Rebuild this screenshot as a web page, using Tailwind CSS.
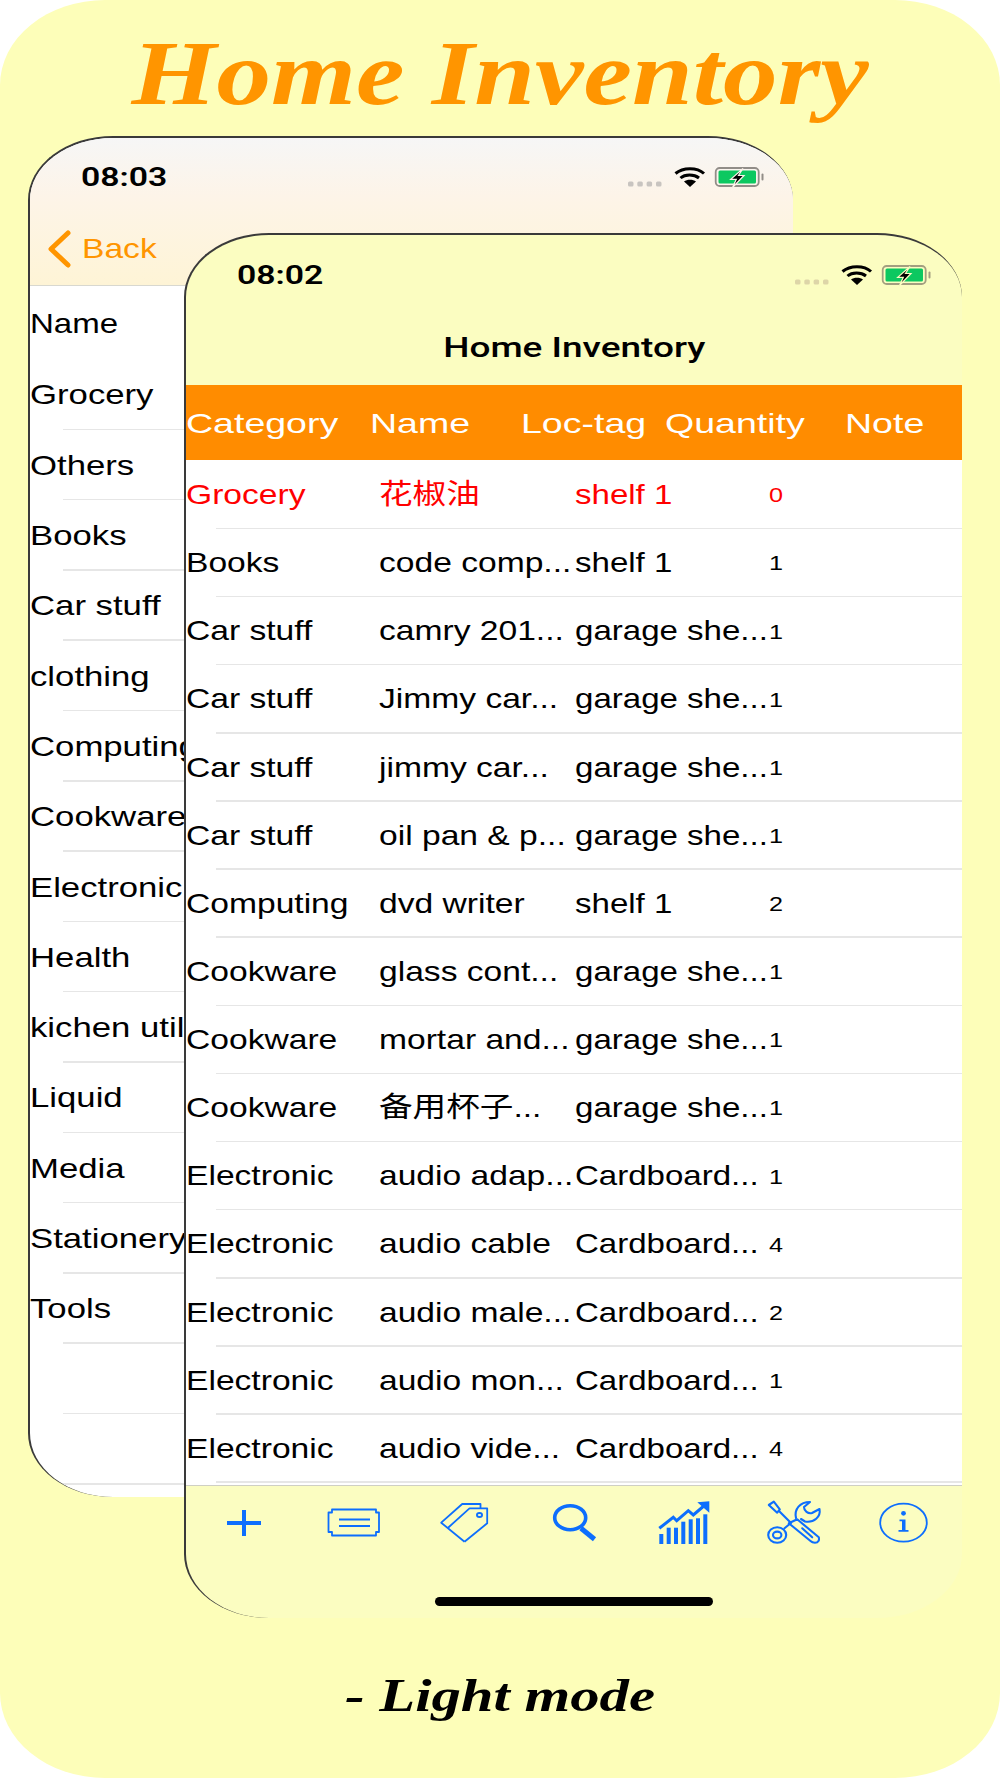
<!doctype html>
<html>
<head>
<meta charset="utf-8">
<script src="https://cdn.jsdelivr.net/npm/@tailwindcss/browser@4"></script>
</head>
<body class="bg-white">
<div class="relative w-[1000px] h-[1778px] overflow-hidden bg-[#fdfeb9] rounded-[105px/85px] font-['Liberation_Sans','Noto_Sans_CJK_SC',sans-serif] text-black">

  <div class="flex justify-center pt-[24px] h-[137px]">
    <h1 class="font-['Liberation_Serif',serif] font-bold italic text-[91px] leading-[100px] text-[#ff9500] scale-x-[1.2] whitespace-nowrap">Home Inventory</h1>
  </div>

  <!-- back window -->
  <section class="absolute left-[28px] top-[136px] w-[765px] h-[1361px] rounded-[85px/64px] overflow-hidden border-l-2 border-t-2 border-[#3a3a3a] bg-white">
    <div class="h-[147.5px] border-b-[1.5px] border-[#d8d8d0] bg-gradient-to-b from-[#f6f6f6] via-[#fdf4e8] via-40% to-[#fef4d6]">
      <div class="flex justify-between items-start pt-[25px] pl-[51px] pr-[27px] h-[84px]">
        <div class="font-['Roboto'] font-semibold text-[25px] leading-[30px] origin-left scale-x-[1.35] whitespace-nowrap">08:03</div>
        <svg class="mt-[2px]" width="140" height="24" viewBox="0 0 140 24">
          <g fill="#c8c4c0"><rect x="2" y="16.5" width="5.5" height="5" rx="1.5"/><rect x="11.3" y="16.5" width="5.5" height="5" rx="1.5"/><rect x="20.6" y="16.5" width="5.5" height="5" rx="1.5"/><rect x="30" y="16.5" width="5.5" height="5" rx="1.5"/></g>
          <g fill="none" stroke="#000" stroke-width="3"><path d="M49.5 8.5C57 2 71 2 78 8.500"/><path d="M54.500 13C59 9 68 9 73 13"/></g>
          <path d="M58 16.500C61 14.300 67 14.300 70 16.500L64 22Z" fill="#000"/>
          <rect x="89.700" y="3" width="43" height="18" rx="4" fill="none" stroke="#918d88" stroke-width="1.800"/>
          <rect x="92.500" y="5.500" width="37.500" height="13" rx="1.500" fill="#0cc860"/>
          <rect x="135.500" y="8.500" width="2" height="7" rx="1" fill="#918d88"/>
          <polygon points="117,3.500 104.700,14.300 110.300,14.300 106.500,22.500 118,10.500 112.500,10.500" fill="#000" stroke="#fdf3ea" stroke-width="1.200"/>
        </svg>
      </div>
      <div class="flex items-center pl-[16px] h-[54px]">
        <svg width="26" height="38" viewBox="0 0 26 38" fill="none"><path d="M22 3L5 19L22 35" stroke="#ff9500" stroke-width="5" stroke-linecap="round" stroke-linejoin="round"/></svg>
        <span class="ml-[10px] text-[28px] text-[#ff9500] origin-left scale-x-[1.2]">Back</span>
      </div>
    </div>
    <div class="mt-[4px] text-[28px] *:flex *:items-center *:h-[70.3px] *:relative *:pt-[1px]">
      <div><span class="-mt-[3px] origin-left scale-x-[1.18] whitespace-nowrap">Name</span></div>
      <div class="after:absolute after:left-[33px] after:right-0 after:bottom-0 after:h-[1.5px] after:bg-[#e6e6e6]"><span class="origin-left scale-x-[1.24] whitespace-nowrap">Grocery</span></div>
      <div class="after:absolute after:left-[33px] after:right-0 after:bottom-0 after:h-[1.5px] after:bg-[#e6e6e6]"><span class="origin-left scale-x-[1.24] whitespace-nowrap">Others</span></div>
      <div class="after:absolute after:left-[33px] after:right-0 after:bottom-0 after:h-[1.5px] after:bg-[#e6e6e6]"><span class="origin-left scale-x-[1.24] whitespace-nowrap">Books</span></div>
      <div class="after:absolute after:left-[33px] after:right-0 after:bottom-0 after:h-[1.5px] after:bg-[#e6e6e6]"><span class="origin-left scale-x-[1.24] whitespace-nowrap">Car stuff</span></div>
      <div class="after:absolute after:left-[33px] after:right-0 after:bottom-0 after:h-[1.5px] after:bg-[#e6e6e6]"><span class="origin-left scale-x-[1.24] whitespace-nowrap">clothing</span></div>
      <div class="after:absolute after:left-[33px] after:right-0 after:bottom-0 after:h-[1.5px] after:bg-[#e6e6e6]"><span class="origin-left scale-x-[1.24] whitespace-nowrap">Computing</span></div>
      <div class="after:absolute after:left-[33px] after:right-0 after:bottom-0 after:h-[1.5px] after:bg-[#e6e6e6]"><span class="origin-left scale-x-[1.24] whitespace-nowrap">Cookware</span></div>
      <div class="after:absolute after:left-[33px] after:right-0 after:bottom-0 after:h-[1.5px] after:bg-[#e6e6e6]"><span class="origin-left scale-x-[1.24] whitespace-nowrap">Electronic</span></div>
      <div class="after:absolute after:left-[33px] after:right-0 after:bottom-0 after:h-[1.5px] after:bg-[#e6e6e6]"><span class="origin-left scale-x-[1.24] whitespace-nowrap">Health</span></div>
      <div class="after:absolute after:left-[33px] after:right-0 after:bottom-0 after:h-[1.5px] after:bg-[#e6e6e6]"><span class="origin-left scale-x-[1.24] whitespace-nowrap">kichen utils</span></div>
      <div class="after:absolute after:left-[33px] after:right-0 after:bottom-0 after:h-[1.5px] after:bg-[#e6e6e6]"><span class="origin-left scale-x-[1.24] whitespace-nowrap">Liquid</span></div>
      <div class="after:absolute after:left-[33px] after:right-0 after:bottom-0 after:h-[1.5px] after:bg-[#e6e6e6]"><span class="origin-left scale-x-[1.24] whitespace-nowrap">Media</span></div>
      <div class="after:absolute after:left-[33px] after:right-0 after:bottom-0 after:h-[1.5px] after:bg-[#e6e6e6]"><span class="origin-left scale-x-[1.24] whitespace-nowrap">Stationery</span></div>
      <div class="after:absolute after:left-[33px] after:right-0 after:bottom-0 after:h-[1.5px] after:bg-[#e6e6e6]"><span class="origin-left scale-x-[1.24] whitespace-nowrap">Tools</span></div>
      <div class="after:absolute after:left-[33px] after:right-0 after:bottom-0 after:h-[1.5px] after:bg-[#e6e6e6]"></div>
      <div class="after:absolute after:left-[33px] after:right-0 after:bottom-0 after:h-[1.5px] after:bg-[#e6e6e6]"></div>
    </div>
  </section>

  <!-- front window -->
  <section class="absolute left-[184px] top-[233px] w-[778px] h-[1385px] rounded-[85px/64px] overflow-hidden border-l-2 border-t-2 border-[#3a3a3a] bg-[#fbfdc1] flex flex-col">
    <div class="h-[150px] shrink-0">
      <div class="flex justify-between items-start pt-[26px] pl-[51px] pr-[29px] h-[95px]">
        <div class="font-['Roboto'] font-semibold text-[25px] leading-[30px] origin-left scale-x-[1.35] whitespace-nowrap">08:02</div>
        <svg class="mt-[2px]" width="140" height="24" viewBox="0 0 140 24">
          <g fill="#ddd5a8"><rect x="2" y="16.5" width="5.5" height="5" rx="1.5"/><rect x="11.3" y="16.5" width="5.5" height="5" rx="1.5"/><rect x="20.6" y="16.5" width="5.5" height="5" rx="1.5"/><rect x="30" y="16.5" width="5.5" height="5" rx="1.5"/></g>
          <g fill="none" stroke="#000" stroke-width="3"><path d="M49.5 8.5C57 2 71 2 78 8.500"/><path d="M54.500 13C59 9 68 9 73 13"/></g>
          <path d="M58 16.500C61 14.300 67 14.300 70 16.500L64 22Z" fill="#000"/>
          <rect x="89.700" y="3" width="43" height="18" rx="4" fill="none" stroke="#a39f80" stroke-width="1.800"/>
          <rect x="92.500" y="5.500" width="37.500" height="13" rx="1.500" fill="#0cc860"/>
          <rect x="135.500" y="8.500" width="2" height="7" rx="1" fill="#a39f80"/>
          <polygon points="117,3.500 104.700,14.300 110.300,14.300 106.500,22.500 118,10.500 112.500,10.500" fill="#000" stroke="#fbfdc1" stroke-width="1.200"/>
        </svg>
      </div>
      <div class="flex justify-center">
        <div class="font-['Roboto'] font-medium text-[28px] leading-[36px] scale-x-[1.32] whitespace-nowrap">Home Inventory</div>
      </div>
    </div>

    <div class="h-[75px] shrink-0 bg-[#ff8c00] text-white text-[28px] grid grid-cols-[184px_151px_144px_180px_1fr] items-center pt-[2px] *:origin-left *:scale-x-[1.34] *:whitespace-nowrap">
      <div>Category</div><div>Name</div><div>Loc-tag</div><div>Quantity</div><div>Note</div>
    </div>

    <div class="h-[1025px] shrink-0 bg-white overflow-hidden text-[28px] *:h-[68.13px] *:relative *:grid *:grid-cols-[193px_196px_194px_1fr] *:items-center *:pt-[2px] *:after:absolute *:after:left-[30px] *:after:right-0 *:after:bottom-[-1px] *:after:h-[1.5px] *:after:bg-[#e6e6e6] **:origin-left">
      <div class="text-[#ff0000]"><div class="scale-x-[1.2] whitespace-nowrap">Grocery</div><div class="scale-x-[1.2] whitespace-nowrap">花椒油</div><div class="scale-x-[1.18] whitespace-nowrap">shelf 1</div><div class="scale-x-[1.2] text-[21px]">0</div></div>
      <div><div class="scale-x-[1.2] whitespace-nowrap">Books</div><div class="scale-x-[1.2] whitespace-nowrap">code comp...</div><div class="scale-x-[1.18] whitespace-nowrap">shelf 1</div><div class="scale-x-[1.2] text-[21px]">1</div></div>
      <div><div class="scale-x-[1.2] whitespace-nowrap">Car stuff</div><div class="scale-x-[1.2] whitespace-nowrap">camry 201...</div><div class="scale-x-[1.18] whitespace-nowrap">garage she...</div><div class="scale-x-[1.2] text-[21px]">1</div></div>
      <div><div class="scale-x-[1.2] whitespace-nowrap">Car stuff</div><div class="scale-x-[1.2] whitespace-nowrap">Jimmy car...</div><div class="scale-x-[1.18] whitespace-nowrap">garage she...</div><div class="scale-x-[1.2] text-[21px]">1</div></div>
      <div><div class="scale-x-[1.2] whitespace-nowrap">Car stuff</div><div class="scale-x-[1.2] whitespace-nowrap">jimmy car...</div><div class="scale-x-[1.18] whitespace-nowrap">garage she...</div><div class="scale-x-[1.2] text-[21px]">1</div></div>
      <div><div class="scale-x-[1.2] whitespace-nowrap">Car stuff</div><div class="scale-x-[1.2] whitespace-nowrap">oil pan &amp; p...</div><div class="scale-x-[1.18] whitespace-nowrap">garage she...</div><div class="scale-x-[1.2] text-[21px]">1</div></div>
      <div><div class="scale-x-[1.2] whitespace-nowrap">Computing</div><div class="scale-x-[1.2] whitespace-nowrap">dvd writer</div><div class="scale-x-[1.18] whitespace-nowrap">shelf 1</div><div class="scale-x-[1.2] text-[21px]">2</div></div>
      <div><div class="scale-x-[1.2] whitespace-nowrap">Cookware</div><div class="scale-x-[1.2] whitespace-nowrap">glass cont...</div><div class="scale-x-[1.18] whitespace-nowrap">garage she...</div><div class="scale-x-[1.2] text-[21px]">1</div></div>
      <div><div class="scale-x-[1.2] whitespace-nowrap">Cookware</div><div class="scale-x-[1.2] whitespace-nowrap">mortar and...</div><div class="scale-x-[1.18] whitespace-nowrap">garage she...</div><div class="scale-x-[1.2] text-[21px]">1</div></div>
      <div><div class="scale-x-[1.2] whitespace-nowrap">Cookware</div><div class="scale-x-[1.2] whitespace-nowrap">备用杯子...</div><div class="scale-x-[1.18] whitespace-nowrap">garage she...</div><div class="scale-x-[1.2] text-[21px]">1</div></div>
      <div><div class="scale-x-[1.2] whitespace-nowrap">Electronic</div><div class="scale-x-[1.2] whitespace-nowrap">audio adap...</div><div class="scale-x-[1.18] whitespace-nowrap">Cardboard...</div><div class="scale-x-[1.2] text-[21px]">1</div></div>
      <div><div class="scale-x-[1.2] whitespace-nowrap">Electronic</div><div class="scale-x-[1.2] whitespace-nowrap">audio cable</div><div class="scale-x-[1.18] whitespace-nowrap">Cardboard...</div><div class="scale-x-[1.2] text-[21px]">4</div></div>
      <div><div class="scale-x-[1.2] whitespace-nowrap">Electronic</div><div class="scale-x-[1.2] whitespace-nowrap">audio male...</div><div class="scale-x-[1.18] whitespace-nowrap">Cardboard...</div><div class="scale-x-[1.2] text-[21px]">2</div></div>
      <div><div class="scale-x-[1.2] whitespace-nowrap">Electronic</div><div class="scale-x-[1.2] whitespace-nowrap">audio mon...</div><div class="scale-x-[1.18] whitespace-nowrap">Cardboard...</div><div class="scale-x-[1.2] text-[21px]">1</div></div>
      <div><div class="scale-x-[1.2] whitespace-nowrap">Electronic</div><div class="scale-x-[1.2] whitespace-nowrap">audio vide...</div><div class="scale-x-[1.18] whitespace-nowrap">Cardboard...</div><div class="scale-x-[1.2] text-[21px]">4</div></div>
    </div>

    <div class="grow border-t-[1.5px] border-[#cfcfc4] flex flex-col items-center">
      <div class="w-full flex justify-between pl-[28px] pr-[28px] pt-[13px]">
        <svg width="60" height="48" viewBox="0 0 60 48" fill="none" stroke="#0d6efd"><path d="M13 24H47M30 11V37" stroke-width="4"/></svg>
        <svg width="60" height="48" viewBox="0 0 60 48" fill="none" stroke="#0d6efd" stroke-width="1.800"><path d="M8 10.500H52V13.500H55V33H52V36.500H8V33H4.500V13.500H8Z" stroke-linejoin="round"/><path d="M15 20.500H46M15 27H46"/></svg>
        <svg width="60" height="48" viewBox="0 0 60 48" fill="none" stroke="#0d6efd" stroke-width="1.800" stroke-linejoin="round"><path d="M30.500 42.700L7.200 23.700L28.200 5H46.500V9.300"/><path d="M13.800 29L35.500 9.300H53.200V24.300L30.500 42.700"/><ellipse cx="45.500" cy="16" rx="2.600" ry="2"/></svg>
        <svg width="60" height="48" viewBox="0 0 60 48" fill="none" stroke="#0d6efd"><ellipse cx="26.200" cy="18.700" rx="15.500" ry="12" stroke-width="3.600"/><path d="M37 29.300L50.500 40.300" stroke-width="5"/></svg>
        <svg width="60" height="48" viewBox="0 0 60 48" fill="#0d6efd"><rect x="5.300" y="35" width="4" height="10"/><rect x="12.700" y="28.700" width="4" height="16.300"/><rect x="20" y="28.700" width="4" height="16.300"/><rect x="27.300" y="22.700" width="4" height="22.300"/><rect x="34.700" y="20.300" width="4" height="24.700"/><rect x="42" y="19.300" width="4" height="25.700"/><rect x="49.300" y="15.300" width="4" height="29.700"/><path d="M5.300 29.300L19.300 18.300L22.700 21.700L34.300 11.700L39.300 16L51 6" fill="none" stroke="#0d6efd" stroke-width="3"/><polygon points="43.300,3.300 55.300,2.300 55.300,13.700"/></svg>
        <svg width="60" height="48" viewBox="0 0 60 48" fill="none" stroke="#0d6efd" stroke-width="2.100" stroke-linejoin="round" stroke-linecap="round"><path d="M4.800 6L9.800 2.700L15.800 10.300L13.200 13.700Z"/><path d="M15 12L27 24"/><path d="M24.800 24.300L33.200 20.300L54.800 38.300C55.500 41 54.500 43.700 51 43.700C49 43.700 47.500 43 46.500 42Z"/><path d="M38.200 29.300L48.200 38.300"/><ellipse cx="13.200" cy="36" rx="9" ry="7.800"/><ellipse cx="13.200" cy="36" rx="4.200" ry="3.400"/><path d="M20.500 29.300L26 24.800"/><path d="M32 19C30 10 36 3 46 3L40 8C40 12 44 15 48 14L55.500 10C57 18 50 24 41 22.500L37 20"/></svg>
        <svg width="60" height="48" viewBox="0 0 60 48" fill="none" stroke="#0d6efd"><ellipse cx="29.500" cy="23.700" rx="23.300" ry="19" stroke-width="1.800"/><circle cx="29.500" cy="14.300" r="2.400" fill="#0d6efd" stroke="none"/><path d="M25.500 20.500H31.500V31H34.500V32.800H24.500V31H28V22.300H25.500Z" fill="#0d6efd" stroke="none"/></svg>
      </div>
      <div class="mt-[50px] -ml-[1px] w-[278px] h-[9px] rounded-full bg-black"></div>
    </div>
  </section>

  <div class="absolute bottom-[56px] left-0 right-0 flex justify-center">
    <div class="font-['Liberation_Serif',serif] font-bold italic text-[47px] leading-[54px] scale-x-[1.25] whitespace-nowrap">- Light mode</div>
  </div>
</div>
</body>
</html>
